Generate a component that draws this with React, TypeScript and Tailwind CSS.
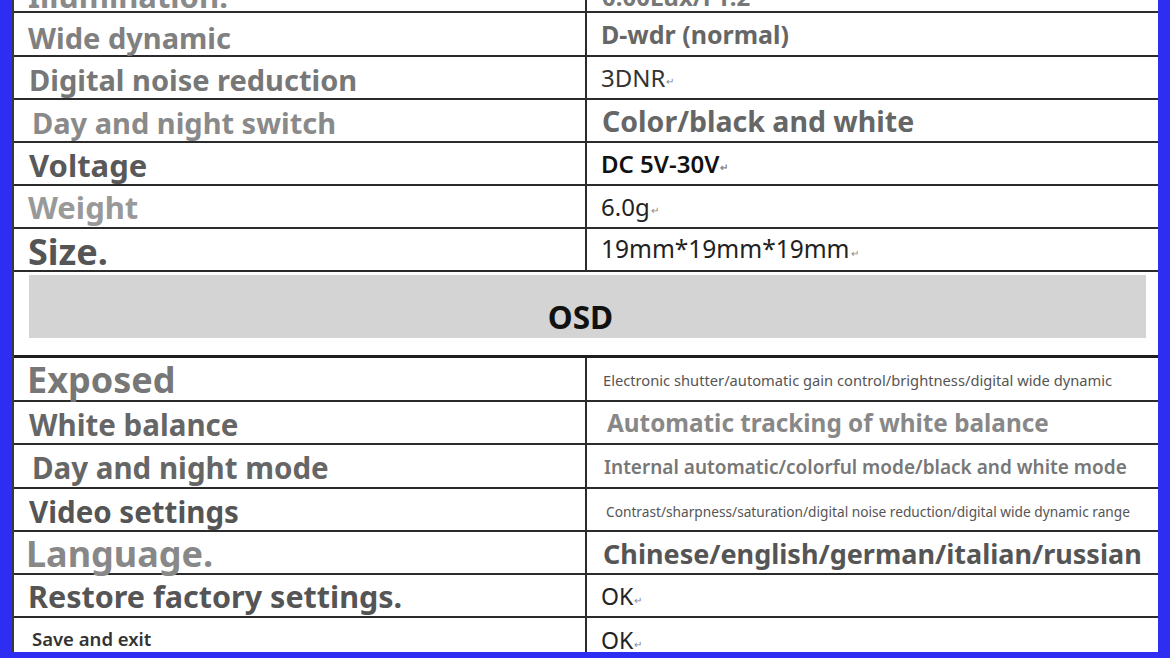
const font = { fontFamily: '"Noto Sans", "Open Sans", sans-serif' };

type Row = {
  h: string;
  left: string;
  lc: string;
  right: string;
  rc: string;
  ret?: boolean;
};

const topRows: Row[] = [
  { h: 'h-[44px]', left: 'Illumination.', lc: 'pl-[14px] pt-[12px] text-[31px] font-bold text-[#8a8a8a]', right: '0.00Lux/F1.2', rc: 'pl-[15px] pt-[12px] text-[24px] font-bold text-[#777]' },
  { h: 'h-[44px]', left: 'Wide dynamic', lc: 'pl-[14px] pt-[6px] text-[29px] font-bold text-[#808080]', right: 'D-wdr (normal)', rc: 'pl-[14px] text-[25px] font-bold text-[#666]' },
  { h: 'h-[43px]', left: 'Digital noise reduction', lc: 'pl-[15px] pt-[4px] text-[29px] font-bold text-[#777]', right: '3DNR', rc: 'pl-[14px] text-[24px] text-[#333]', ret: true },
  { h: 'h-[43px]', left: 'Day and night switch', lc: 'pl-[18px] pt-[4px] text-[29px] font-bold text-[#8a8a8a]', right: 'Color/black and white', rc: 'pl-[15px] pt-[2px] text-[28.5px] font-bold text-[#666]' },
  { h: 'h-[43px]', left: 'Voltage', lc: 'pl-[15px] pt-[4px] text-[31px] font-bold text-[#595959]', right: 'DC 5V-30V', rc: 'pl-[14px] text-[24px] font-semibold text-[#111]', ret: true },
  { h: 'h-[43px]', left: 'Weight', lc: 'pl-[14px] pt-[2px] text-[31px] font-bold text-[#999]', right: '6.0g', rc: 'pl-[14px] text-[24px] text-[#222]', ret: true },
  { h: 'h-[43px]', left: 'Size.', lc: 'pl-[14px] pt-[4px] text-[36px] font-bold text-[#555]', right: '19mm*19mm*19mm', rc: 'pl-[14px] text-[24.5px] text-[#222]', ret: true },
];

const osdRows: Row[] = [
  { h: 'h-[44px]', left: 'Exposed', lc: 'pl-[13px] pt-[2px] text-[36px] font-bold text-[#777]', right: 'Electronic shutter/automatic gain control/brightness/digital wide dynamic', rc: 'pl-[16px] pt-[2px] text-[14.7px] text-[#555]' },
  { h: 'h-[43px]', left: 'White balance', lc: 'pl-[15px] pt-[4px] text-[29.5px] font-bold text-[#666]', right: 'Automatic tracking of white balance', rc: 'pl-[20px] pt-[2px] text-[24.3px] font-bold text-[#888]' },
  { h: 'h-[44px]', left: 'Day and night mode', lc: 'pl-[18px] pt-[4px] text-[29.5px] font-bold text-[#666]', right: 'Internal automatic/colorful mode/black and white mode', rc: 'pl-[17px] pt-[2px] text-[19px] font-semibold text-[#777]' },
  { h: 'h-[43px]', left: 'Video settings', lc: 'pl-[15px] pt-[4px] text-[29.5px] font-bold text-[#555]', right: 'Contrast/sharpness/saturation/digital noise reduction/digital wide dynamic range', rc: 'pl-[19px] pt-[4px] text-[13.7px] text-[#555]' },
  { h: 'h-[43px]', left: 'Language.', lc: 'pl-[12px] pt-[2px] text-[36px] font-bold text-[#888]', right: 'Chinese/english/german/italian/russian', rc: 'pl-[16px] pt-[2px] text-[27px] font-bold text-[#555]' },
  { h: 'h-[43px]', left: 'Restore factory settings.', lc: 'pl-[14px] pt-[2px] text-[30.5px] font-bold text-[#555]', right: 'OK', rc: 'pl-[14px] pt-[2px] text-[23px] text-[#222]', ret: true },
  { h: 'h-[43px]', left: 'Save and exit', lc: 'pl-[18px] pt-[2px] text-[18.5px] font-semibold text-[#333]', right: 'OK', rc: 'pl-[14px] pt-[4px] text-[23px] text-[#222]', ret: true },
];

function TableRow({ row }: { row: Row }) {
  return (
    <div className={`grid grid-cols-[573px_1fr] border-b-2 border-[#2b2b2b] ${row.h}`}>
      <div className={`flex items-center whitespace-nowrap border-r-2 border-[#2b2b2b] leading-none ${row.lc}`}>
        {row.left}
      </div>
      <div className={`flex items-center whitespace-nowrap leading-none ${row.rc}`}>
        <span>{row.right}</span>
        {row.ret && <span className="ml-[1px] mt-[6px] text-[10px] text-[#888]">↵</span>}
      </div>
    </div>
  );
}

export default function App() {
  return (
    <div className="flex h-[658px] w-[1170px] flex-col overflow-hidden bg-[#2e2ef2]" style={font}>
      <div className="flex min-h-0 flex-1">
        <div className="w-[12px] bg-[#2e2ef2]" />
        <div className="flex-1 overflow-hidden border-l-2 border-[#3a3a3a] bg-white">
          <div className="-mt-[31px]">
            {topRows.map((r) => (
              <TableRow key={r.left} row={r} />
            ))}
            <div className="h-[86px] border-b-[3px] border-[#1e1e1e] pl-[15px] pr-[12px] pt-[3px]">
              <div className="flex h-[63px] items-center justify-center bg-[#d4d4d4] pr-[14px] pt-[20px] text-[31.5px] font-bold text-[#111]">
                OSD
              </div>
            </div>
            {osdRows.map((r) => (
              <TableRow key={r.left} row={r} />
            ))}
          </div>
        </div>
        <div className="w-[12px] bg-[#2e2ef2]" />
      </div>
      <div className="h-[6px] bg-[#2e2ef2]" />
    </div>
  );
}
